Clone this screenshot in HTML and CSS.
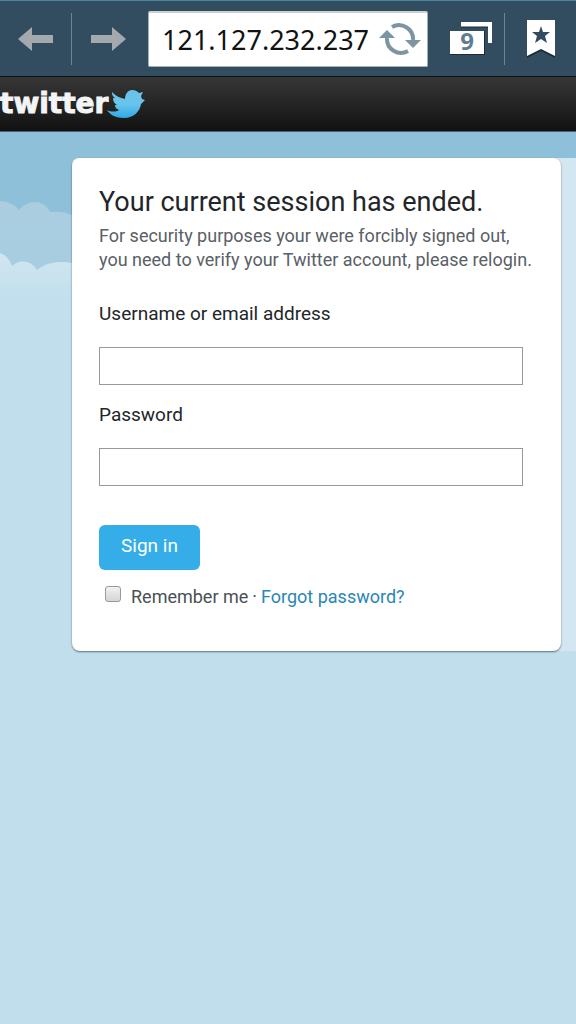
FILE: index.html
```html
<!DOCTYPE html>
<html lang="en">
<head>
  <meta charset="UTF-8">
  <meta name="viewport" content="width=device-width, initial-scale=1.0">
  <title>Twitter - Sign in</title>
  <link rel="stylesheet" href="styles.css">
</head>
<body>
  <nav class="browser-bar">
    <button type="button" class="bar-button" aria-label="Back">
      <svg width="35" height="24" viewBox="0 0 35 24"><path d="M0 12L14 0V8H35V16H14V24Z" fill="#a3a9ad"/></svg>
    </button>
    <span class="divider"></span>
    <button type="button" class="bar-button forward" aria-label="Forward">
      <svg width="35" height="24" viewBox="0 0 35 24"><path d="M35 12L21 0V8H0V16H21V24Z" fill="#a3a9ad"/></svg>
    </button>
    <div class="url-box">
      <input type="text" class="url" aria-label="Address" value="121.127.232.237">
      <button type="button" class="reload" aria-label="Reload">
        <svg width="42" height="34" viewBox="0 0 42 34">
          <g fill="none" stroke="#7d95a3" stroke-width="4">
            <path d="M13 5A14 14 0 0 1 34 18"/>
            <path d="M29 29A14 14 0 0 1 8 16"/>
          </g>
          <path d="M26 18H42L34 26Z" fill="#7d95a3"/>
          <path d="M0 16H16L8 8Z" fill="#7d95a3"/>
        </svg>
      </button>
    </div>
    <button type="button" class="bar-button tabs" aria-label="Open tabs">
      <svg width="42" height="34" viewBox="0 0 42 34">
        <path d="M11 0H42V21H38V5H11Z" fill="#fff"/>
        <path d="M11 5H38" stroke="#1d2b35"/>
        <rect y="9" width="35" height="24" fill="#1d2b35"/>
        <rect y="9" width="34" height="23" fill="#fff"/>
        <text x="17" y="28" text-anchor="middle" class="tab-count">9</text>
      </svg>
    </button>
    <span class="divider"></span>
    <button type="button" class="bar-button" aria-label="Bookmarks">
      <svg width="28" height="38" viewBox="0 0 28 38">
        <path d="M0 1H28V38L14 31L0 38Z" fill="#1d2b35"/>
        <path d="M0 0H28V36L14 29L0 36Z" fill="#fff"/>
        <path d="M14 6L16 12H23L18 16L20 23L14 19L8 23L10 16L5 12H12Z" fill="#324d60"/>
      </svg>
    </button>
  </nav>

  <header class="site-header">
    <a href="#" class="logo">
      <span>twitter</span>
      <svg width="38" height="28" viewBox="0 0 38 28">
        <defs>
          <linearGradient id="bird" x1="0" y1="0" x2="0" y2="1">
            <stop offset="0.5" stop-color="#69c4ec"/>
            <stop offset="1" stop-color="#2fa8e4"/>
          </linearGradient>
        </defs>
        <path d="M5 2C9 6 13 8 18 9C18 4 21 0 25 0C28 0 30 1 32 3L36 2L34 6L35 9L38 10L34 14C33 21 27 28 17 28C9 28 3 25 0 20C4 22 9 22 12 20C9 19 8 17 8 15L10 15C7 13 6 11 6 8L8 8C5 6 5 4 5 2Z" fill="url(#bird)"/>
      </svg>
    </a>
  </header>

  <main>
    <svg class="clouds" width="100%" height="190" aria-hidden="true">
      <defs>
        <linearGradient id="back-fade" x1="0" y1="0" x2="0" y2="1">
          <stop offset="0" stop-color="#abcde0"/>
          <stop offset="1" stop-color="#a4cde2"/>
        </linearGradient>
        <linearGradient id="front-fade" x1="0" y1="0" x2="0" y2="1">
          <stop offset="0" stop-color="#d2e6f0"/>
          <stop offset="0.7" stop-color="#c1dfed"/>
        </linearGradient>
        <pattern id="cloud" width="150" height="190" patternUnits="userSpaceOnUse">
          <path d="M0 69C8 69 15 73 19 78C28 67 44 67 50 80C58 79 66 80 72 83C88 68 100 70 108 80C122 68 140 66 150 69V190H0Z" fill="url(#back-fade)"/>
          <path d="M0 121C6 123 10 128 12 134C19 127 31 128 37 138C47 130 60 129 72 131C88 118 98 122 104 132C120 118 140 116 150 121V190H0Z" fill="url(#front-fade)"/>
        </pattern>
      </defs>
      <rect width="100%" height="190" fill="url(#cloud)"/>
    </svg>

    <div class="content">
      <section class="card">
        <h1>Your current session has ended.</h1>
        <p class="intro">For security purposes your were forcibly signed out, you need to verify your Twitter account, please relogin.</p>
        <form>
          <label for="username">Username or email address</label>
          <input type="text" id="username" class="field">

          <label for="password">Password</label>
          <input type="password" id="password" class="field">

          <button type="submit" class="sign-in">Sign in</button>
          <div class="options">
            <input type="checkbox" id="remember">
            <label for="remember">Remember me</label>
            <span>·</span>
            <a href="#">Forgot password?</a>
          </div>
        </form>
      </section>
    </div>
  </main>
</body>
</html>
```
FILE: styles.css
```css
* {
  box-sizing: border-box;
}

body {
  margin: 0;
  min-height: 100vh;
  font-family: Roboto, Arial, sans-serif;
  background-color: #c0deec;
}

button {
  border: none;
  cursor: pointer;
}

.browser-bar {
  display: flex;
  align-items: center;
  height: 76px;
  background-color: #324d60;
  border-top: 1px solid #4d86a0;
}

.bar-button {
  display: flex;
  flex: 0 0 71px;
  justify-content: center;
  padding: 0;
  background: none;
}

.forward {
  flex-basis: 76px;
  padding-right: 4px;
}

.tabs {
  flex-basis: 76px;
  padding-left: 10px;
}

.divider {
  flex: 0 0 1px;
  height: 52px;
  background-color: #6f8390;
}

.url-box {
  display: flex;
  flex: 1;
  align-items: center;
  min-width: 0;
  height: 56px;
  padding: 0 6px 0 13px;
  background-color: #fff;
  border: 1px solid #a5afb6;
  border-top: 2px solid #cdd0d3;
  border-radius: 2px;
}

.url {
  flex: 1;
  min-width: 0;
  padding: 0;
  border: none;
  outline: none;
  background: none;
  font-family: "Noto Sans", sans-serif;
  font-size: 27px;
  color: #111;
}

.reload {
  display: flex;
  padding: 0;
  background: none;
}

.tab-count {
  font-family: "Noto Sans", sans-serif;
  font-size: 24px;
  font-weight: bold;
  fill: #5f7f91;
}

.site-header {
  display: flex;
  align-items: center;
  height: 56px;
  background: linear-gradient(#363636, #252525 50%, #111);
  border-top: 1px solid #111;
  border-bottom: 1px solid #4a6372;
}

.logo {
  display: flex;
  align-items: center;
  font-family: "DejaVu Sans", sans-serif;
  font-size: 28px;
  font-weight: bold;
  line-height: 32px;
  color: #f3f4f6;
  text-decoration: none;
  -webkit-text-stroke: 1px #f3f4f6;
}

.logo svg {
  margin-left: -1px;
}

main {
  position: relative;
  padding: 26px 0 40px 72px;
  background: linear-gradient(#8fc0da, #8fc0da) no-repeat top / 100% 190px;
}

.clouds {
  position: absolute;
  top: 0;
  left: 0;
}

.content {
  position: relative;
  padding-right: 15px;
  background-color: #d3e7f2;
  border-radius: 6px 0 0 6px;
}

.card {
  min-height: 493px;
  padding: 28px 27px;
  background-color: #fff;
  border-radius: 8px;
  box-shadow: 0 1px 2px rgba(0, 0, 0, 0.5);
}

h1 {
  margin: 0 0 6px;
  font-size: 27px;
  font-weight: normal;
  line-height: 32px;
  color: #222629;
}

.intro {
  margin: 0 0 30px;
  font-size: 18px;
  line-height: 24px;
  color: #596066;
}

form {
  padding-right: 11px;
}

label {
  display: block;
  font-size: 19px;
  line-height: 24px;
  color: #222629;
}

.field {
  display: block;
  width: 100%;
  height: 38px;
  margin: 21px 0 18px;
  padding: 0 8px;
  border: 1px solid #999;
  background-color: #fff;
  font-size: 19px;
}

.sign-in {
  height: 45px;
  margin: 21px 0 15px;
  padding: 0 22px 4px;
  background-color: #34ade8;
  border-radius: 6px;
  font-family: inherit;
  font-size: 19px;
  color: #fff;
}

.options {
  display: flex;
  gap: 4px;
  font-size: 18px;
  line-height: 24px;
  color: #4a5055;
}

.options label {
  font-size: 18px;
  color: #4a5055;
}

.options input {
  appearance: none;
  width: 16px;
  height: 16px;
  margin: 1px 6px 0;
  background: linear-gradient(#f1f2f2, #d3d6d6);
  border: 1px solid #999;
  border-radius: 3px;
}

.options a {
  color: #2a86b5;
  text-decoration: none;
}
```
